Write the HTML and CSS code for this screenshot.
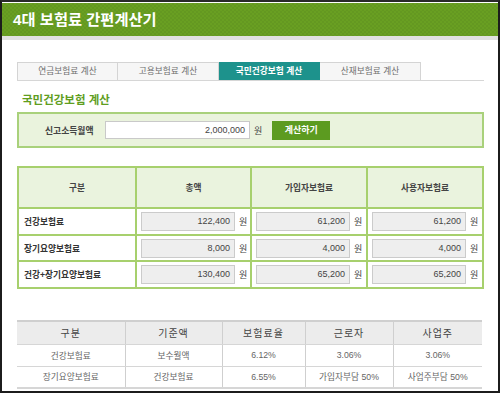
FILE: index.html
```html
<!DOCTYPE html>
<html lang="ko">
<head>
<meta charset="utf-8">
<title>4대 보험료 간편계산기</title>
<link rel="stylesheet" href="styles.css">
</head>
<body>
<div class="frame">
  <header class="top">
    <h1 class="title">4대 보험료 간편계산기</h1>
  </header>
  <div class="content">
    <ul class="tabs">
      <li class="tab">연금보험료 계산</li>
      <li class="tab">고용보험료 계산</li>
      <li class="tab active">국민건강보험 계산</li>
      <li class="tab">산재보험료 계산</li>
    </ul>

    <h2 class="sec-title">국민건강보험 계산</h2>

    <div class="income-box">
      <span class="income-label">신고소득월액</span>
      <span class="field income-field">2,000,000</span>
      <span class="unit">원</span>
      <span class="calc-btn">계산하기</span>
    </div>

    <table class="result">
      <colgroup>
        <col class="c1"><col class="c2"><col class="c3"><col class="c4">
      </colgroup>
      <thead>
        <tr class="head-row">
          <th>구분</th><th>총액</th><th>가입자보험료</th><th>사용자보험료</th>
        </tr>
      </thead>
      <tbody>
        <tr class="r1">
          <td class="lbl">건강보험료</td>
          <td><div class="cell"><span class="field ro">122,400</span><span class="unit">원</span></div></td>
          <td><div class="cell"><span class="field ro">61,200</span><span class="unit">원</span></div></td>
          <td><div class="cell"><span class="field ro">61,200</span><span class="unit">원</span></div></td>
        </tr>
        <tr class="r2">
          <td class="lbl">장기요양보험료</td>
          <td><div class="cell"><span class="field ro">8,000</span><span class="unit">원</span></div></td>
          <td><div class="cell"><span class="field ro">4,000</span><span class="unit">원</span></div></td>
          <td><div class="cell"><span class="field ro">4,000</span><span class="unit">원</span></div></td>
        </tr>
        <tr class="r3">
          <td class="lbl">건강+장기요양보험료</td>
          <td><div class="cell"><span class="field ro">130,400</span><span class="unit">원</span></div></td>
          <td><div class="cell"><span class="field ro">65,200</span><span class="unit">원</span></div></td>
          <td><div class="cell"><span class="field ro">65,200</span><span class="unit">원</span></div></td>
        </tr>
      </tbody>
    </table>

    <table class="rates">
      <colgroup>
        <col class="k1"><col class="k2"><col class="k3"><col class="k4"><col class="k5">
      </colgroup>
      <thead>
        <tr><th>구분</th><th>기준액</th><th>보험료율</th><th>근로자</th><th>사업주</th></tr>
      </thead>
      <tbody>
        <tr><td>건강보험료</td><td>보수월액</td><td>6.12%</td><td>3.06%</td><td>3.06%</td></tr>
        <tr><td>장기요양보험료</td><td>건강보험료</td><td>6.55%</td><td>가입자부담 50%</td><td>사업주부담 50%</td></tr>
      </tbody>
    </table>
  </div>
</div>
</body>
</html>
```

FILE: styles.css
```css
* { box-sizing: border-box; }

html, body {
  margin: 0;
  padding: 0;
  background: #ffffff;
}

body {
  font-family: "Liberation Sans", "Noto Sans CJK KR", sans-serif;
  color: #333;
}

.frame {
  width: 500px;
  height: 393px;
  border: 2px solid #1c1c1c;
  border-top: 2px solid #2a2a2a;
  overflow: hidden;
  background: #fff;
}

.top {
  margin-top: 1px;
  height: 37px;
  background-color: #699f22;
  background-image: repeating-conic-gradient(rgba(0,0,0,0.045) 0 25%, transparent 0 50%);
  background-size: 4px 4px;
  border-bottom: 4px solid #e1e1e1;
}

.title {
  margin: 0;
  padding-left: 11px;
  font-size: 15.3px;
  line-height: 34px;
  font-weight: bold;
  color: #ffffff;
  letter-spacing: 0;
}

.content {
  padding: 0 14px 0 15px;
}

.tabs {
  list-style: none;
  margin: 22px 0 0 0;
  padding: 0;
  display: flex;
  border-bottom: 1px solid #d6d6d6;
}

.tab {
  width: 101px;
  height: 18px;
  border: 1px solid #d4d4d4;
  border-bottom: none;
  border-left: none;
  background: #f6f6f6;
  color: #6e6e6e;
  font-size: 8.7px;
  line-height: 17px;
  text-align: center;
}

.tab:first-child { border-left: 1px solid #d4d4d4; }

.tab.active {
  background: #1d928c;
  border-color: #1d928c;
  color: #ffffff;
  font-weight: bold;
}

.sec-title {
  margin: 12px 0 0 5px;
  font-size: 11.5px;
  line-height: 14px;
  font-weight: bold;
  color: #5f9e1f;
}

.income-box {
  margin-top: 5px;
  height: 36px;
  border: 2px solid #a9d17b;
  background: #eaf3dd;
  display: flex;
  align-items: center;
  padding-left: 26px;
}

.income-label {
  font-size: 8.8px;
  font-weight: bold;
  color: #444;
  width: 60px;
}

.field {
  display: block;
  height: 18px;
  border: 1px solid #c9c9c9;
  background: #fff;
  text-align: right;
  padding-right: 4px;
  font-size: 9px;
  line-height: 16px;
  color: #444;
}

.income-field {
  width: 145px;
}

.unit {
  font-size: 9px;
  color: #444;
  margin-left: 4px;
}

.calc-btn {
  margin-left: 10px;
  width: 58px;
  height: 19px;
  background: #5c9b20;
  color: #fff;
  font-size: 9px;
  font-weight: bold;
  line-height: 19px;
  text-align: center;
}

.result {
  margin-top: 18px;
  width: 465px;
  border-collapse: collapse;
  table-layout: fixed;
  border: 2px solid #9fcb60;
}

.result .c1 { width: 118px; }
.result .c2 { width: 115px; }
.result .c3 { width: 116px; }
.result .c4 { width: 116px; }

.result th,
.result td {
  border: 2px solid #a7d06d;
  padding: 0;
}

.result th {
  height: 41px;
  background: #eaf3de;
  font-size: 8.7px;
  font-weight: bold;
  color: #444;
}

.result .r1 td { height: 27px; }
.result .r2 td { height: 26px; }
.result .r3 td { height: 27px; }

.result .lbl {
  padding-left: 5px;
  font-size: 8.7px;
  font-weight: bold;
  color: #333;
}

.cell {
  display: flex;
  align-items: center;
  padding-left: 4px;
}

.field.ro {
  width: 94px;
  height: 19px;
  background: #eeeeee;
  border-color: #cbcbcb;
  line-height: 17px;
}

.rates {
  margin-top: 31px;
  width: 465px;
  border-collapse: collapse;
  table-layout: fixed;
  border-top: 2px solid #cfcfcf;
  border-bottom: 2px solid #d6d6d6;
}

.rates .k1 { width: 108px; }
.rates .k2 { width: 97px; }
.rates .k3 { width: 83px; }
.rates .k4 { width: 88px; }
.rates .k5 { width: 89px; }

.rates th,
.rates td {
  border-left: 1px solid #cfcfcf;
  border-bottom: 1px solid #d6d6d6;
  text-align: center;
  padding: 0;
}

.rates th:first-child,
.rates td:first-child { border-left: none; }

.rates th {
  height: 23px;
  background: #ececec;
  font-size: 10px;
  font-weight: normal;
  letter-spacing: 1px;
  color: #444;
}

.rates td {
  height: 22px;
  font-size: 8.7px;
  color: #666;
}
```
